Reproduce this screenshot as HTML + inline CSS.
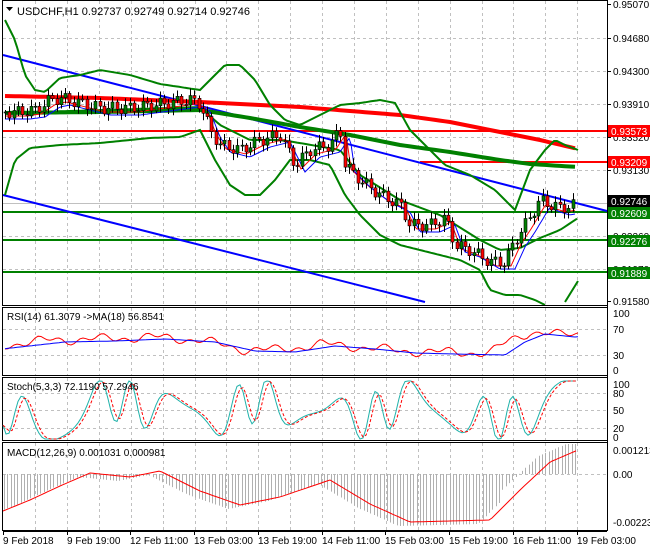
<!DOCTYPE html>
<html><head><meta charset="utf-8">
<style>
html,body{margin:0;padding:0;background:#fff;width:650px;height:550px;overflow:hidden}
svg{display:block;font-family:"Liberation Sans",sans-serif}
</style></head><body>
<svg id="s" width="650" height="550" xmlns="http://www.w3.org/2000/svg">
<rect width="650" height="550" fill="#fff"/>
<g id="grid" stroke="#c0c0c0" stroke-dasharray="3,3" stroke-width="1"></g>
<g id="main"></g>
<g fill="none" stroke="#000" stroke-width="1">
<rect x="2.5" y="0.5" width="605" height="305"/>
<rect x="2.5" y="307.5" width="605" height="68"/>
<rect x="2.5" y="377.5" width="605" height="63"/>
<rect x="2.5" y="442.5" width="605" height="88"/>
</g>
<g font-size="10" fill="#000" id="labels">
<text x="17" y="15" font-size="11">USDCHF,H1  0.92737 0.92749 0.92714 0.92746</text>
<path d="M6 7 L13 7 L9.5 11Z" fill="#000"/>
<text x="7" y="320">RSI(14) 61.3079  -&gt;MA(18) 56.8541</text>
<text x="7" y="390">Stoch(5,3,3) 72.1190 57.2946</text>
<text x="7" y="456">MACD(12,26,9) 0.001031 0.000981</text>
</g>
</svg>
<script>
var S=document.getElementById('s'),NS='http://www.w3.org/2000/svg';
function el(t,a,p){var e=document.createElementNS(NS,t);for(var k in a)e.setAttribute(k,a[k]);(p||S).appendChild(e);return e}
function interp(pts,x){for(var i=0;i<pts.length-1;i++){if(x<=pts[i+1][0]){var a=pts[i],b=pts[i+1];return a[1]+(b[1]-a[1])*(x-a[0])/(b[0]-a[0])}}return pts[pts.length-1][1]}
function pl(pts,c,w,g,dash){var d=pts.map(function(p){return p[0]+','+(+p[1]).toFixed(1)}).join(' ');var a={points:d,fill:'none',stroke:c,'stroke-width':w};if(dash)a['stroke-dasharray']=dash;el('polyline',a,g)}
function smooth(pts,x0,x1,st){var r=[];for(var x=x0;x<=x1;x+=st)r.push([x,+interp(pts,x).toFixed(1)]);return r}
var G=document.getElementById('grid'),M=document.getElementById('main');
var vx=[];for(var x=35;x<600;x+=31.9)vx.push(Math.round(x)+.5);
vx.forEach(function(x){el('line',{x1:x,y1:1,x2:x,y2:305},G);el('line',{x1:x,y1:308,x2:x,y2:375},G);el('line',{x1:x,y1:378,x2:x,y2:440},G);el('line',{x1:x,y1:443,x2:x,y2:530},G)});
[38,71,104,137,170,203,236,269].forEach(function(y){el('line',{x1:3,y1:y+.5,x2:607,y2:y+.5},G)});
[329,355].forEach(function(y){el('line',{x1:3,y1:y+.5,x2:607,y2:y+.5},G)});
[393,410,428].forEach(function(y){el('line',{x1:3,y1:y+.5,x2:607,y2:y+.5},G)});
el('line',{x1:3,y1:474.5,x2:607,y2:474.5},G);
el('line',{x1:3,y1:131,x2:607,y2:131,stroke:'#f00','stroke-width':2},M);
el('line',{x1:420,y1:162,x2:607,y2:162,stroke:'#f00','stroke-width':2},M);
[212,240,272].forEach(function(y){el('line',{x1:3,y1:y,x2:607,y2:y,stroke:'#008000','stroke-width':2},M)});
el('line',{x1:3,y1:203.5,x2:607,y2:203.5,stroke:'#c0c0c0','stroke-width':1},M);
el('line',{x1:3,y1:55,x2:607,y2:211,stroke:'#0000ff','stroke-width':2},M);
el('line',{x1:3,y1:195,x2:425,y2:302,stroke:'#0000ff','stroke-width':2},M);
pl(smooth([[5,96],[100,98],[200,102],[300,107],[400,115],[450,122],[500,132],[540,140],[578,149]],5,578,5),'#f00',4,M);
pl(smooth([[5,113],[100,112],[200,110],[250,118],[300,127],[350,135],[400,145],[450,152],[500,160],[530,164],[578,167]],5,578,5),'#008000',4,M);
pl(smooth([[5,20],[15,40],[25,75],[35,90],[45,92],[60,78],[80,75],[100,70],[130,75],[160,84],[200,90],[215,75],[225,65],[240,65],[255,80],[270,105],[285,120],[300,125],[310,120],[340,105],[360,103],[380,100],[395,103],[410,130],[430,150],[445,165],[470,175],[495,190],[515,210],[530,170],[545,150],[555,140],[565,145],[578,150]],5,578,3),'#008000',2,M);
pl(smooth([[5,195],[15,160],[30,148],[60,145],[100,143],[150,138],[180,137],[200,130],[215,160],[230,185],[245,195],[260,195],[275,180],[290,160],[310,160],[330,165],[345,195],[360,215],[380,235],[400,245],[420,250],[440,255],[460,260],[480,270],[490,290],[505,295],[520,295],[535,300],[545,305]],5,545,3),'#008000',2,M);
pl([[565,302],[578,281]],'#008000',2,M);
pl(smooth([[5,113],[200,107],[220,125],[250,140],[280,140],[300,143],[340,150],[360,175],[400,200],[440,215],[480,240],[500,250],[520,248],[540,238],[560,230],[578,218]],5,578,4),'#008000',2,M);
var P=[[5,112],[20,112],[35,110],[50,100],[60,98],[80,103],[100,108],[130,108],[160,104],[190,100],[200,104],[210,130],[220,145],[240,150],[260,140],[280,135],[295,165],[310,150],[330,145],[340,130],[345,165],[360,180],[380,195],[400,205],[410,225],[430,225],[445,218],[455,245],[470,250],[490,262],[505,262],[515,240],[525,225],[540,200],[550,205],[560,208],[575,205]];
var fast=[],slow=[];
for(var x=5;x<=575;x+=2)fast.push([x,interp(P,x-6)+4]),slow.push([x,interp(P,x-10)+7]);
pl(fast,'#f00',1,M);pl(slow,'#00f',1,M);
var prev=interp(P,5);
for(var x=5,i=0;x<=575;x+=4.3,i++){
 var c=interp(P,x)+Math.sin(i*1.7)*6,o=prev,hi=Math.min(o,c)-2-Math.abs(Math.sin(i*2.3))*5,lo=Math.max(o,c)+2+Math.abs(Math.cos(i*1.3))*5;
 var xx=Math.round(x)+.5;
 el('line',{x1:xx,y1:hi,x2:xx,y2:lo,stroke:'#000','stroke-width':1},M);
 var bear=c>o;el('rect',{x:xx-1.5,y:Math.min(o,c),width:3,height:Math.max(1,Math.abs(c-o)),fill:bear?'#f00':'#008000',stroke:'#000','stroke-width':.6},M);
 prev=c;
}
el('line',{x1:607.5,y1:0,x2:607.5,y2:531,stroke:'#000'});
var L=document.getElementById('labels');
[['0.95070',4],['0.94680',38],['0.94300',71],['0.93910',104],['0.93520',137],['0.93130',170],['0.92740',203],['0.92360',236],['0.91970',269],['0.91580',301]].forEach(function(a){el('line',{x1:607,y1:a[1]+.5,x2:611,y2:a[1]+.5,stroke:'#000'});var t=el('text',{x:613,y:a[1]+4},L);t.textContent=a[0]});
[['0.93573',131,'#f00'],['0.93209',162,'#f00'],['0.92746',201,'#000'],['0.92609',213,'#008000'],['0.92276',241,'#008000'],['0.91889',273,'#008000']].forEach(function(a){el('rect',{x:608,y:a[1]-6,width:42,height:12,fill:a[2]},L);var t=el('text',{x:611,y:a[1]+4,fill:'#fff'},L);t.textContent=a[0]});
[['100',313],['70',329],['30',355],['0',370],['100',384],['80',393],['50',410],['20',428],['0',437],['0.001213',450],['0.00',474],['-0.002237',522]].forEach(function(a){var t=el('text',{x:613,y:a[1]+4},L);t.textContent=a[0]});
var rsi=[],rma=[];
var RB=[[5,345],[50,340],[100,339],[150,337],[200,340],[240,349],[280,350],[320,344],[360,347],[400,351],[440,352],[490,353],[510,340],[530,332],[560,335],[578,333]];
for(var x=5;x<=578;x+=3){rsi.push([x,interp(RB,x)+Math.sin(x*.29)*2.5+Math.sin(x*.11)*3]);rma.push([x,interp(RB,x-15)+2])}
pl(rsi,'#f00',1);pl(rma,'#00f',1);
var st=[],sd=[];for(var x=3;x<=578;x+=3){var v=410+Math.sin(x*.13+Math.sin(x*.05)*2)*22+Math.sin(x*.041)*10;v=Math.max(381,Math.min(439,v));st.push([x,v]);}
st.forEach(function(p,i){var j=Math.max(0,i-2);sd.push([p[0],(st[j][1]+st[Math.max(0,i-1)][1]+p[1])/3])});
pl(st,'#20b2aa',1);pl(sd,'#f00',1,null,'3,2');
var MB=[[3,511],[30,500],[60,486],[90,473],[130,477],[160,471],[200,491],[240,505],[280,497],[330,480],[370,504],[410,522],[450,521],[490,520],[520,490],[550,462],[578,450]];
var hg=el('g',{stroke:'#b0b0b0','stroke-width':1});
for(var x=4;x<=578;x+=3.3){var y=interp(MB,x+12)+(x>500?-6:4);var xx=Math.round(x)+.5;el('line',{x1:xx,y1:474,x2:xx,y2:y},hg)}
pl(smooth(MB,3,578,3),'#f00',1);
el('line',{x1:3,y1:531.5,x2:607,y2:531.5,stroke:'#000'});
[['9 Feb 2018',3],['9 Feb 19:00',67],['12 Feb 11:00',130],['13 Feb 03:00',194],['13 Feb 19:00',258],['14 Feb 11:00',322],['15 Feb 03:00',385],['15 Feb 19:00',449],['16 Feb 11:00',513],['19 Feb 03:00',577]].forEach(function(a){el('line',{x1:a[1]+.5,y1:531,x2:a[1]+.5,y2:535,stroke:'#000'});var t=el('text',{x:a[1],y:544},L);t.textContent=a[0]});
S.appendChild(L);
</script>
</body></html>
